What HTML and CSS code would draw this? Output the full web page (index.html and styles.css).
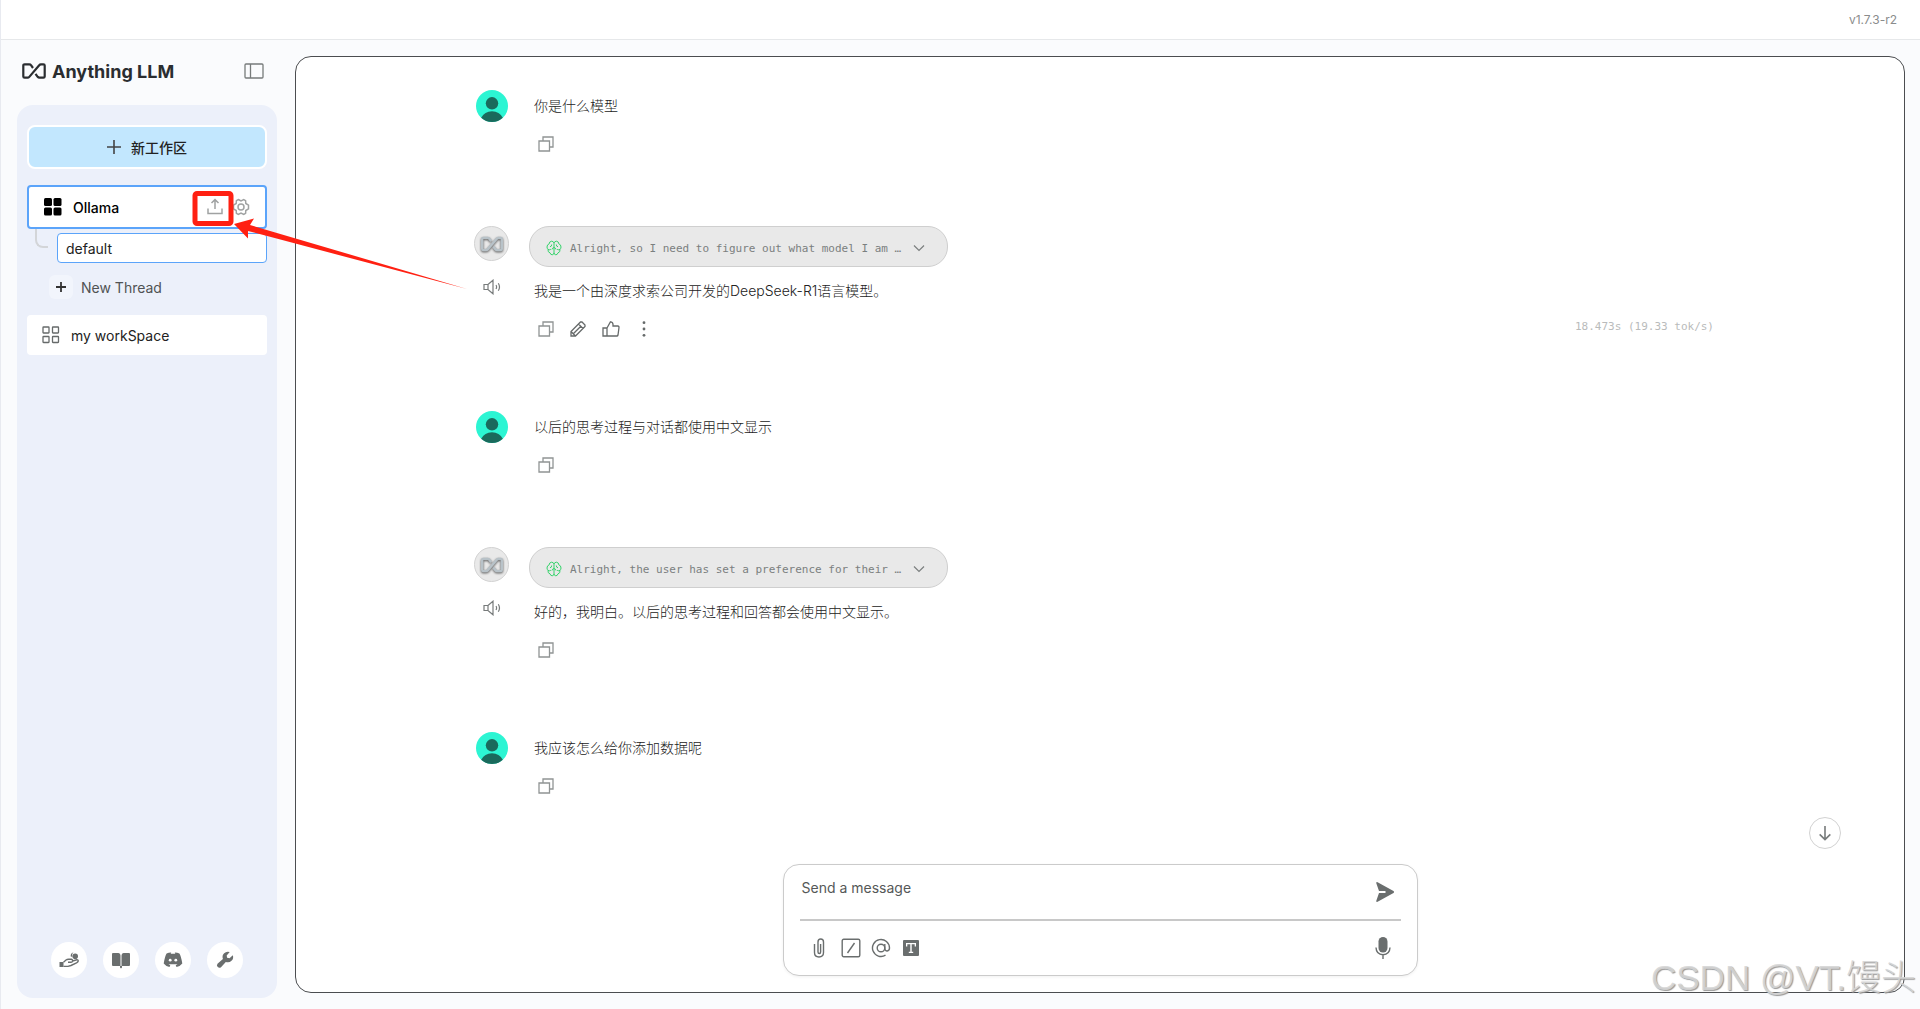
FILE: index.html
```html
<!DOCTYPE html>
<html lang="zh-CN">
<head>
    <meta charset="UTF-8">
    <meta name="viewport" content="width=device-width, initial-scale=1.0">
    <title>Anything LLM</title>
    <link rel="stylesheet" href="styles.css">
</head>
<body>
    <!-- Shared icons -->
    <svg class="sprite" aria-hidden="true">
        <symbol id="i-logo" viewBox="0 0 24 16">
            <path d="M11 5L9 2.200Q8.400 1.300 7.200 1.300H2.600Q1.300 1.300 1.300 2.600V13.400Q1.300 14.700 2.600 14.700H5.600Q6.600 14.700 7.300 13.900L17.200 2.200Q17.900 1.300 18.900 1.300H21.400Q22.700 1.300 22.700 2.600V13.400Q22.700 14.700 21.400 14.700H17.400Q16.400 14.700 15.700 13.800L13.500 10.800"/>
        </symbol>
        <symbol id="i-copy" viewBox="0 0 16 16">
            <path d="M1 5H11.500V15H1zM5 5V1H15V11H11.500"/>
        </symbol>
        <symbol id="i-speaker" viewBox="0 0 18 16">
            <path d="M1 5.500H5L10 1.200V14.800L5 10.500H1zM5 5.500V10.500M13 6Q14.200 8 13 10M15.300 4.200Q17.700 8 15.300 11.800"/>
        </symbol>
        <symbol id="i-brain" viewBox="0 0 16 16">
            <path d="M8 3Q7.500 1.200 5.500 1.200Q3.200 1.500 3.200 3.800Q1 4.500 1 7Q1 8.500 2 9.300Q1.600 12.300 4 12.800Q4.500 14.800 6.200 14.800Q8 14.500 8 12.800zM8 3Q8.500 1.200 10.500 1.200Q12.800 1.500 12.800 3.800Q15 4.500 15 7Q15 8.500 14 9.300Q14.400 12.300 12 12.800Q11.500 14.800 9.800 14.800Q8 14.500 8 12.800M5.700 4.500Q5.800 6.500 4 6.800M10.300 4.500Q10.200 6.500 12 6.800M2 9.300Q3.500 10.200 4.800 9.400M14 9.300Q12.500 10.200 11.200 9.400M8 7.500Q6.300 7.800 6 9.500M8 7.500Q9.700 7.800 10 9.500"/>
        </symbol>
        <symbol id="i-chevron" viewBox="0 0 12 8">
            <path d="M1 1.500L6 6.500L11 1.500"/>
        </symbol>
        <symbol id="i-user" viewBox="0 0 32 32">
            <circle class="face-bg" cx="16" cy="16" r="16"/>
            <circle class="face" cx="16" cy="13.300" r="6.200"/>
            <path class="face" d="M5.200 27.800Q8.500 21.300 16 21.200Q23.500 21.300 26.800 27.800Q22.500 32 16 32Q9.500 32 5.200 27.800z"/>
        </symbol>
    </svg>

    <header class="topbar">
        <span class="version">v1.7.3-r2</span>
    </header>

    <div class="layout">
        <aside class="sidebar">
            <div class="brand">
                <a class="logo" href="#">
                    <svg class="icon logo-mark"><use href="#i-logo"/></svg>
                    <span>Anything LLM</span>
                </a>
                <button class="icon-btn" type="button" aria-label="Toggle sidebar">
                    <svg class="icon toggle" viewBox="0 0 20 16"><rect x="1" y="1" width="18" height="14" rx="1"/><path d="M6.500 1V15"/></svg>
                </button>
            </div>

            <div class="panel">
                <button class="new-workspace" type="button">
                    <svg class="icon plus" viewBox="0 0 14 14"><path d="M7 0V14M0 7H14"/></svg>
                    <span>新工作区</span>
                </button>

                <nav class="workspaces">
                    <div class="workspace active">
                        <svg class="grid-solid" viewBox="0 0 18 18"><rect width="8" height="8" rx="1.500"/><rect x="9.500" width="8" height="8" rx="1.500"/><rect y="9.500" width="8" height="8" rx="1.500"/><rect x="9.500" y="9.500" width="8" height="8" rx="1.500"/></svg>
                        <a href="#">Ollama</a>
                        <div class="workspace-tools">
                            <button class="icon-btn" type="button" aria-label="Upload">
                                <svg class="icon" viewBox="0 0 18 18"><path d="M2 10.500V15.500H16V10.500M9 11V2M5.500 5L9 1.600L12.500 5"/></svg>
                            </button>
                            <button class="icon-btn" type="button" aria-label="Settings">
                                <svg class="icon" viewBox="0 0 18 18"><circle cx="9" cy="9" r="3"/><path d="M6.300 1.500L9 3L11.700 1.500L13.600 2.600L13.800 5.500L16.500 7.200V10.800L13.800 12.500L13.600 15.400L11.700 16.500L9 15L6.300 16.500L4.400 15.400L4.200 12.500L1.500 10.800V7.200L4.200 5.500L4.400 2.600z"/></svg>
                            </button>
                        </div>
                    </div>
                    <div class="thread">
                        <span class="branch"></span>
                        <a href="#">default</a>
                    </div>
                    <button class="new-thread" type="button">
                        <span class="plus-box"><svg class="icon" viewBox="0 0 10 10"><path d="M5 0V10M0 5H10"/></svg></span>
                        <span>New Thread</span>
                    </button>
                    <div class="workspace">
                        <svg class="icon grid-line" viewBox="0 0 18 18"><rect x="1" y="1" width="6" height="6" rx="0.500"/><rect x="10.500" y="1" width="6" height="6" rx="0.500"/><rect x="1" y="10.500" width="6" height="6" rx="0.500"/><rect x="10.500" y="10.500" width="6" height="6" rx="0.500"/></svg>
                        <a href="#">my workSpace</a>
                    </div>
                </nav>

                <footer class="links">
                    <a href="#" aria-label="Sponsor">
                        <svg viewBox="0 0 20 20"><circle cx="16.200" cy="6.300" r="2.800"/><path d="M14.500 2.200A4 4 0 0 0 11.700 6.500L13 6.800Q12.300 4 14.500 2.200zM0.500 12H4.500V17H0.500z"/><path class="stroke" d="M4.500 12.200L7 10Q8 9.300 9.500 9.300H12.300Q13.800 9.500 13.600 11Q13.400 12.300 12 12.300H9M13.600 11L17.800 9.800Q19.300 9.700 19.200 11Q19 12 17.500 12.800L12 15.500L9 16.400H4.500"/></svg>
                    </a>
                    <a href="#" aria-label="Docs">
                        <svg viewBox="0 0 20 20"><path d="M2 3H7.500Q9.500 3.200 9.500 5.500V16H2Q1 16 1 15V4Q1 3 2 3zM18 3H12.500Q10.500 3.200 10.500 5.500V16H18Q19 16 19 15V4Q19 3 18 3zM9 16H11V17.500L10 18.500L9 17.500z"/></svg>
                    </a>
                    <a href="#" aria-label="Discord">
                        <svg viewBox="0 0 20 20"><path d="M8.200 2.500L7.700 3.800H12.300L11.800 2.500Q14.500 2.500 16.400 3.600Q18 6 19.300 13.500Q17.500 16 13.500 17L12.700 15.200L14.600 14.300H5.400L7.300 15.200L6.500 17Q2.500 16 0.700 13.500Q2 6 3.600 3.600Q5.500 2.500 8.200 2.500z"/><circle class="eye" cx="7.200" cy="10.200" r="1.400"/><circle class="eye" cx="12.800" cy="10.200" r="1.400"/></svg>
                    </a>
                    <a href="#" aria-label="Settings">
                        <svg viewBox="0 0 20 20"><path d="M17.800 5.200A5.300 5.300 0 0 1 10.800 11.900L6 17.200A2.500 2.500 0 0 1 2.500 13.700L7.900 8.900A5.300 5.300 0 0 1 14.700 2.100L11.700 5.400L12.100 7.700L14.500 8.200z"/></svg>
                    </a>
                </footer>
            </div>
        </aside>

        <main class="chat">
            <div class="messages">
                <article class="message">
                    <div class="who"><svg class="avatar"><use href="#i-user"/></svg></div>
                    <div class="content">
                        <p>你是什么模型</p>
                        <div class="actions">
                            <button class="icon-btn" type="button" aria-label="Copy"><svg class="icon"><use href="#i-copy"/></svg></button>
                        </div>
                    </div>
                </article>

                <article class="message">
                    <div class="who">
                        <span class="bot"><svg class="icon bot-shade"><use href="#i-logo"/></svg></span>
                        <button class="icon-btn speak" type="button" aria-label="Speak"><svg class="icon"><use href="#i-speaker"/></svg></button>
                    </div>
                    <div class="content">
                        <button class="thought" type="button">
                            <svg class="icon brain"><use href="#i-brain"/></svg>
                            <span>Alright, so I need to figure out what model I am …</span>
                            <svg class="icon chevron"><use href="#i-chevron"/></svg>
                        </button>
                        <p>我是一个由深度求索公司开发的DeepSeek-R1语言模型。</p>
                        <div class="actions">
                            <button class="icon-btn" type="button" aria-label="Copy"><svg class="icon"><use href="#i-copy"/></svg></button>
                            <button class="icon-btn" type="button" aria-label="Edit">
                                <svg class="icon dark" viewBox="0 0 16 16"><path d="M1 15V10.500L10.500 1H12L15 4V5.500L5.500 15zM1 10.500L5.500 15M8.500 3L13 7.500M3.300 12.700L10.800 5.200"/></svg>
                            </button>
                            <button class="icon-btn" type="button" aria-label="Good response">
                                <svg class="icon dark thumb" viewBox="0 0 18 16"><path d="M1 7H5V15H1zM5 7L8.500 0.800Q11 1 11 3.500V5H16Q17.200 5.200 17 6.500L16 14Q15.800 15 14.800 15H5"/></svg>
                            </button>
                            <button class="icon-btn" type="button" aria-label="More">
                                <svg class="dots" viewBox="0 0 16 16"><circle cx="8" cy="1.700" r="1.400"/><circle cx="8" cy="8" r="1.400"/><circle cx="8" cy="14.300" r="1.400"/></svg>
                            </button>
                            <span class="stats">18.473s (19.33 tok/s)</span>
                        </div>
                    </div>
                </article>

                <article class="message">
                    <div class="who"><svg class="avatar"><use href="#i-user"/></svg></div>
                    <div class="content">
                        <p>以后的思考过程与对话都使用中文显示</p>
                        <div class="actions">
                            <button class="icon-btn" type="button" aria-label="Copy"><svg class="icon"><use href="#i-copy"/></svg></button>
                        </div>
                    </div>
                </article>

                <article class="message">
                    <div class="who">
                        <span class="bot"><svg class="icon bot-shade"><use href="#i-logo"/></svg></span>
                        <button class="icon-btn speak" type="button" aria-label="Speak"><svg class="icon"><use href="#i-speaker"/></svg></button>
                    </div>
                    <div class="content">
                        <button class="thought" type="button">
                            <svg class="icon brain"><use href="#i-brain"/></svg>
                            <span>Alright, the user has set a preference for their …</span>
                            <svg class="icon chevron"><use href="#i-chevron"/></svg>
                        </button>
                        <p>好的，我明白。以后的思考过程和回答都会使用中文显示。</p>
                        <div class="actions">
                            <button class="icon-btn" type="button" aria-label="Copy"><svg class="icon"><use href="#i-copy"/></svg></button>
                        </div>
                    </div>
                </article>

                <article class="message">
                    <div class="who"><svg class="avatar"><use href="#i-user"/></svg></div>
                    <div class="content">
                        <p>我应该怎么给你添加数据呢</p>
                        <div class="actions">
                            <button class="icon-btn" type="button" aria-label="Copy"><svg class="icon"><use href="#i-copy"/></svg></button>
                        </div>
                    </div>
                </article>
            </div>

            <button class="scroll-down" type="button" aria-label="Scroll to bottom">
                <svg class="icon" viewBox="0 0 16 18"><path d="M8 1V16M2 10.500L8 16.500L14 10.500"/></svg>
            </button>

            <form class="composer" onsubmit="event.preventDefault();">
                <div class="composer-input">
                    <textarea rows="1" placeholder="Send a message" aria-label="Send a message"></textarea>
                    <button class="icon-btn" type="submit" aria-label="Send">
                        <svg class="solid" viewBox="0 0 20 20"><path d="M1.300 1.200Q1 -0.200 2.600 0.200L18.500 9Q19.600 10 18.500 11L2.600 19.800Q1 20.200 1.300 18.800L4 11H10.500V9H4z"/></svg>
                    </button>
                </div>
                <div class="composer-tools">
                    <button class="icon-btn clip" type="button" aria-label="Attach file">
                        <svg class="icon" viewBox="0 0 20 20"><path d="M5.500 6V14.500Q5.500 19 10 19Q14.500 19 14.500 14.500V4Q14.500 1 11.700 1Q9 1 9 4V14Q9 15.500 10.300 15.500Q11.600 15.500 11.600 14V6"/></svg>
                    </button>
                    <button class="icon-btn" type="button" aria-label="Slash commands">
                        <svg class="icon" viewBox="0 0 20 20"><rect x="1.200" y="1.200" width="17.600" height="17.600" rx="1.500"/><path d="M6.500 15L13.500 5"/></svg>
                    </button>
                    <button class="icon-btn" type="button" aria-label="Agents">
                        <svg class="icon" viewBox="0 0 20 20"><circle cx="10" cy="10" r="3.800"/><path d="M13.800 6V10.500Q14 13 16.200 13Q18.500 12.700 18.500 10A8.500 8.500 0 1 0 14.500 17.200"/></svg>
                    </button>
                    <button class="icon-btn" type="button" aria-label="Text size">
                        <svg class="solid" viewBox="0 0 20 20"><path fill-rule="evenodd" d="M3 2H17Q18 2 18 3V17Q18 18 17 18H3Q2 18 2 17V3Q2 2 3 2zM5 5V8.500H6.300V6.300H9.300V13.700H7.800V15H12.200V13.700H10.700V6.300H13.700V8.500H15V5z"/></svg>
                    </button>
                    <button class="icon-btn mic" type="button" aria-label="Microphone">
                        <svg class="solid" viewBox="0 0 20 22"><rect x="5.500" y="0" width="9" height="15.500" rx="4.500"/><path class="stroke" d="M3 10.500Q3.300 17.500 10 17.700Q16.700 17.500 17 10.500M10 17.700V22"/></svg>
                    </button>
                </div>
            </form>
        </main>
    </div>

    <!-- Red callout over the upload button -->
    <svg class="callout" viewBox="0 0 280 104" aria-hidden="true">
        <rect x="5" y="5.500" width="36" height="30" rx="2"/>
        <path d="M44 36L64 30.500L60 37L277 101L58 43L58 50.500z"/>
    </svg>

    <div class="watermark">CSDN @VT.馒头</div>
</body>
</html>
```

FILE: styles.css
```css
* {
    box-sizing: border-box;
}

body {
    margin: 0;
    height: 100vh;
    display: flex;
    flex-direction: column;
    position: relative;
    overflow: hidden;
    background-color: #fafbfd;
    border-left: 1px solid #e8eaf0;
    font-family: Inter, "Noto Sans CJK SC", sans-serif;
    font-size: 14px;
    color: #222;
}

a {
    color: inherit;
    text-decoration: none;
}

button {
    font: inherit;
    color: inherit;
    cursor: pointer;
}

svg {
    display: block;
    flex-shrink: 0;
}

.sprite {
    position: absolute;
    width: 0;
    height: 0;
}

.icon {
    width: 16px;
    height: 16px;
    fill: none;
    stroke: currentColor;
    stroke-width: 1.3;
}

.solid {
    width: 20px;
    height: 20px;
    fill: currentColor;
}

.stroke {
    fill: none;
    stroke: currentColor;
    stroke-width: 1.4;
}

.icon-btn {
    display: flex;
    align-items: center;
    justify-content: center;
    padding: 0;
    border: none;
    background: none;
}

/* Top bar */
.topbar {
    flex: none;
    height: 40px;
    display: flex;
    align-items: center;
    justify-content: flex-end;
    padding: 0 23px;
    background-color: white;
    border-bottom: 1px solid #e6e8ea;
}

.version {
    font-size: 12px;
    color: #8a8c8c;
}

.layout {
    flex: 1;
    min-height: 0;
    display: flex;
    gap: 18px;
    padding: 16px 15px 0 16px;
}

/* Sidebar */
.sidebar {
    width: 260px;
    flex: none;
    display: flex;
    flex-direction: column;
    margin-bottom: 11px;
}

.brand {
    height: 30px;
    display: flex;
    align-items: center;
    justify-content: space-between;
    margin-bottom: 19px;
    padding: 0 13px 0 5px;
}

.logo {
    display: flex;
    align-items: center;
    gap: 6px;
    font-size: 18px;
    font-weight: 700;
    color: #2a2d30;
}

.logo-mark {
    width: 24px;
    stroke-width: 2.2;
}

.toggle {
    width: 20px;
    color: #777b7b;
}

.panel {
    flex: 1;
    display: flex;
    flex-direction: column;
    padding: 20px 10px;
    border-radius: 16px;
    background-color: #ecf0fa;
}

.new-workspace {
    height: 44px;
    display: flex;
    align-items: center;
    justify-content: center;
    gap: 10px;
    margin-bottom: 16px;
    border: 2px solid white;
    border-radius: 8px;
    background-color: #c2e7fe;
    font-weight: 500;
}

.plus {
    width: 14px;
    height: 14px;
    stroke-width: 1.6;
    color: #444;
}

.workspaces {
    flex: 1;
}

.workspace {
    height: 40px;
    display: flex;
    align-items: center;
    gap: 11px;
    padding: 0 15px;
    border-radius: 4px;
    background-color: white;
}

.workspace.active {
    height: 44px;
    border: 2px solid #5ba4fa;
    font-weight: 500;
    color: black;
}

.grid-solid,
.grid-line {
    width: 18px;
    height: 18px;
}

.grid-line {
    color: #666a6a;
}

.workspace-tools {
    display: flex;
    gap: 8px;
    margin-left: auto;
    color: #a0a2a2;
}

.workspace-tools .icon {
    width: 18px;
    height: 18px;
    stroke-width: 1.5;
}

.thread {
    display: flex;
    gap: 9px;
    padding-left: 8px;
}

.branch {
    width: 13px;
    height: 19px;
    border-left: 2px solid #d3d5d8;
    border-bottom: 2px solid #d3d5d8;
    border-bottom-left-radius: 8px;
}

.thread a {
    flex: 1;
    height: 30px;
    margin-top: 4px;
    padding: 0 8px;
    border: 1px solid #5ba4fa;
    border-radius: 4px;
    background-color: white;
    line-height: 30px;
}

.new-thread {
    display: flex;
    align-items: center;
    gap: 8px;
    margin: 12px 0 16px;
    padding: 0 0 0 22px;
    border: none;
    background: none;
    color: #505354;
}

.plus-box {
    width: 24px;
    height: 24px;
    display: flex;
    align-items: center;
    justify-content: center;
    border-radius: 6px;
    background-color: #f2f5fc;
}

.plus-box .icon {
    width: 10px;
    height: 10px;
    stroke-width: 1.8;
    color: #333;
}

.links {
    display: flex;
    justify-content: center;
    gap: 16px;
}

.links a {
    width: 36px;
    height: 36px;
    display: flex;
    align-items: center;
    justify-content: center;
    border-radius: 50%;
    background-color: white;
    color: #6a6e6e;
}

.links svg {
    width: 20px;
    height: 20px;
    fill: currentColor;
}

.links .stroke {
    fill: none;
}

.links .eye {
    fill: white;
}

/* Chat */
.chat {
    flex: 1;
    display: flex;
    flex-direction: column;
    align-items: center;
    position: relative;
    margin-bottom: 16px;
    padding: 33px 0 16px;
    border: 1px solid #4b4d50;
    border-radius: 16px;
    background-color: white;
}

.messages {
    width: 100%;
    max-width: 1252px;
    flex: 1;
    min-height: 0;
    display: flex;
    flex-direction: column;
    gap: 70px;
    overflow: hidden;
}

.message {
    display: flex;
    gap: 20px;
}

.who {
    width: 35px;
    flex: none;
    display: flex;
    flex-direction: column;
    align-items: center;
}

.avatar {
    width: 32px;
    height: 32px;
}

.face-bg {
    fill: #2cf5d3;
}

.face {
    fill: #1a6a5c;
}

.bot {
    width: 35px;
    height: 35px;
    display: flex;
    align-items: center;
    justify-content: center;
    border: 1px solid #d2d2d2;
    border-radius: 50%;
    background-color: #e9e9e9;
}

.bot-shade {
    width: 22px;
    stroke-width: 2.6;
    color: #b8c2c8;
    filter: drop-shadow(0 1px 1px #555);
}

.speak {
    margin-top: 18px;
    color: #777b7b;
}

.speak .icon {
    width: 18px;
    stroke-width: 1.2;
}

.content {
    flex: 1;
}

.content p {
    margin: 0 0 10px;
    padding-left: 5px;
    font-weight: 300;
    line-height: 32px;
}

.thought {
    width: 419px;
    height: 41px;
    display: flex;
    align-items: center;
    gap: 8px;
    margin-bottom: 8px;
    padding: 3px 22px 0 16px;
    border: 1px solid #cfcfcf;
    border-radius: 20px;
    background-color: #e9e9e9;
    font-family: "DejaVu Sans Mono", monospace;
    font-size: 11px;
    color: #7b7f7f;
}

.brain {
    stroke-width: 1;
    color: #35d36b;
}

.chevron {
    width: 12px;
    height: 8px;
    margin-left: auto;
    stroke-width: 1.2;
}

.actions {
    height: 24px;
    display: flex;
    align-items: center;
    gap: 16px;
    padding-left: 9px;
    color: #909494;
}

.dark,
.dots {
    color: #666a6a;
}

.thumb {
    width: 18px;
}

.dots {
    width: 16px;
    height: 16px;
    fill: currentColor;
}

.stats {
    margin-left: auto;
    padding: 0 12px 6px 0;
    font-family: "DejaVu Sans Mono", monospace;
    font-size: 11px;
    color: #b9bbbb;
}

.scroll-down {
    position: absolute;
    right: 63px;
    bottom: 143px;
    width: 32px;
    height: 32px;
    display: flex;
    align-items: center;
    justify-content: center;
    padding: 0;
    border: 1px solid #d2d2d2;
    border-radius: 50%;
    background-color: white;
    color: #777b7b;
}

.scroll-down .icon {
    stroke-width: 1.8;
}

/* Message box */
.composer {
    width: 635px;
    max-width: 100%;
    padding: 0 16px;
    border: 1px solid #cbcbcb;
    border-radius: 16px;
    background-color: white;
    box-shadow: 0 1px 3px rgba(0, 0, 0, 0.06);
    color: #6a6e6e;
}

.composer-input {
    height: 56px;
    display: flex;
    align-items: center;
    padding-right: 6px;
    border-bottom: 2px solid #c8c8c8;
}

.composer textarea {
    flex: 1;
    height: 28px;
    padding: 0 2px 8px;
    border: none;
    outline: none;
    resize: none;
    overflow: hidden;
    background: none;
    font: inherit;
    line-height: 20px;
}

.composer textarea::placeholder {
    color: #555858;
}

.composer-tools {
    height: 54px;
    display: flex;
    align-items: center;
    gap: 10px;
    padding: 0 8px 0 7px;
}

.composer-tools .icon {
    width: 20px;
    height: 20px;
    stroke-width: 1.4;
}

.clip {
    width: 24px;
}

.mic {
    margin-left: auto;
}

.mic .solid {
    height: 22px;
}

.callout {
    position: absolute;
    left: 189px;
    top: 188px;
    width: 280px;
    height: 104px;
    pointer-events: none;
}

.callout rect {
    fill: none;
    stroke: #ff2012;
    stroke-width: 5;
}

.callout path {
    fill: #ff2012;
}

.watermark {
    position: absolute;
    right: 4px;
    bottom: 9px;
    font-family: "Liberation Sans", "Noto Sans CJK SC", sans-serif;
    font-size: 35px;
    font-weight: 300;
    color: rgba(214, 214, 214, 0.9);
    text-shadow: 1px 1px 1px #999;
    pointer-events: none;
}
```
